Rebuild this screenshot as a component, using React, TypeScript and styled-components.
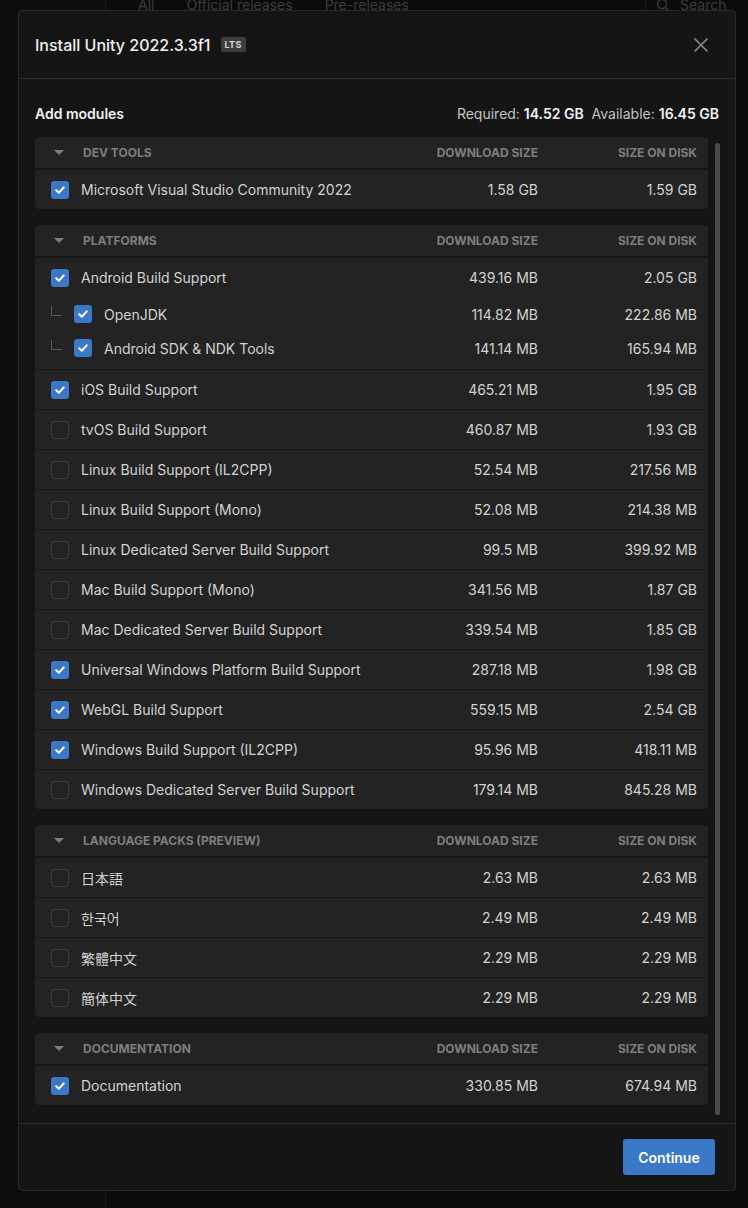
import styled, { createGlobalStyle } from "styled-components";

const GlobalStyle = createGlobalStyle`
  html, body {
    margin: 0;
    padding: 0;
    background: #0b0b0b;
    font-family: Inter, "Noto Sans", "Noto Sans CJK JP", sans-serif;
    -webkit-font-smoothing: antialiased;
  }
  * {
    box-sizing: border-box;
  }
`;

type Module = {
  name: string;
  download: string;
  disk: string;
  checked?: boolean;
  children?: Module[];
};

type Section = {
  title: string;
  modules: Module[];
};

const sections: Section[] = [
  {
    title: "Dev tools",
    modules: [
      { name: "Microsoft Visual Studio Community 2022", download: "1.58 GB", disk: "1.59 GB", checked: true },
    ],
  },
  {
    title: "Platforms",
    modules: [
      {
        name: "Android Build Support",
        download: "439.16 MB",
        disk: "2.05 GB",
        checked: true,
        children: [
          { name: "OpenJDK", download: "114.82 MB", disk: "222.86 MB", checked: true },
          { name: "Android SDK & NDK Tools", download: "141.14 MB", disk: "165.94 MB", checked: true },
        ],
      },
      { name: "iOS Build Support", download: "465.21 MB", disk: "1.95 GB", checked: true },
      { name: "tvOS Build Support", download: "460.87 MB", disk: "1.93 GB" },
      { name: "Linux Build Support (IL2CPP)", download: "52.54 MB", disk: "217.56 MB" },
      { name: "Linux Build Support (Mono)", download: "52.08 MB", disk: "214.38 MB" },
      { name: "Linux Dedicated Server Build Support", download: "99.5 MB", disk: "399.92 MB" },
      { name: "Mac Build Support (Mono)", download: "341.56 MB", disk: "1.87 GB" },
      { name: "Mac Dedicated Server Build Support", download: "339.54 MB", disk: "1.85 GB" },
      { name: "Universal Windows Platform Build Support", download: "287.18 MB", disk: "1.98 GB", checked: true },
      { name: "WebGL Build Support", download: "559.15 MB", disk: "2.54 GB", checked: true },
      { name: "Windows Build Support (IL2CPP)", download: "95.96 MB", disk: "418.11 MB", checked: true },
      { name: "Windows Dedicated Server Build Support", download: "179.14 MB", disk: "845.28 MB" },
    ],
  },
  {
    title: "Language packs (Preview)",
    modules: [
      { name: "日本語", download: "2.63 MB", disk: "2.63 MB" },
      { name: "한국어", download: "2.49 MB", disk: "2.49 MB" },
      { name: "繁體中文", download: "2.29 MB", disk: "2.29 MB" },
      { name: "簡体中文", download: "2.29 MB", disk: "2.29 MB" },
    ],
  },
  {
    title: "Documentation",
    modules: [{ name: "Documentation", download: "330.85 MB", disk: "674.94 MB", checked: true }],
  },
];

const Page = styled.div`
  position: relative;
  width: 748px;
  height: 1208px;
  overflow: hidden;
  display: flex;
  background: #0b0b0b;
`;

const Sidebar = styled.div`
  width: 106px;
  flex-shrink: 0;
  border-right: 1px solid #1c1c1c;
  background: #0d0d0d;
`;

const Main = styled.div`
  flex: 1;
`;

const TopBar = styled.div`
  height: 24px;
  display: flex;
  align-items: flex-start;
  padding-left: 32px;
  gap: 32px;
  margin-top: -4px;
  font-size: 14px;
  color: #3c3c3c;
`;

const SearchBox = styled.div`
  margin-left: auto;
  width: 103px;
  border-left: 1px solid #1c1c1c;
  display: flex;
  gap: 10px;
  padding-left: 10px;
  align-items: center;
`;

const Backdrop = styled.div`
  position: absolute;
  inset: 0;
  padding: 10px 12px 0 18px;
`;

const Dialog = styled.div`
  width: 718px;
  height: 1181px;
  display: flex;
  flex-direction: column;
  background: #151515;
  border: 1px solid #2a2a2a;
  border-radius: 4px;
`;

const Header = styled.div`
  height: 68px;
  flex-shrink: 0;
  display: flex;
  align-items: center;
  padding: 0 16px;
  border-bottom: 1px solid #2b2b2b;
`;

const Title = styled.h1`
  margin: 0;
  font-size: 16px;
  font-weight: 500;
  color: #f0f0f0;
`;

const Badge = styled.span`
  margin-left: 10px;
  padding: 2px 4px;
  border-radius: 2px;
  background: #3d3d3d;
  color: #d4d4d4;
  font-size: 9px;
  font-weight: 700;
  letter-spacing: 0.3px;
`;

const CloseButton = styled.button`
  margin-left: auto;
  margin-right: 9px;
  width: 18px;
  height: 18px;
  padding: 0;
  border: none;
  background: none;
  display: flex;
  align-items: center;
  justify-content: center;
`;

const SummaryRow = styled.div`
  display: flex;
  align-items: center;
  flex-shrink: 0;
  height: 20px;
  margin: 24px 0 14px;
  padding: 0 16px;
`;

const SummaryTitle = styled.span`
  font-size: 14px;
  font-weight: 600;
  color: #f2f2f2;
`;

const SummaryInfo = styled.span`
  margin-left: auto;
  font-size: 14px;
  color: #c4c4c4;
  b {
    color: #f2f2f2;
    font-weight: 600;
  }
`;

const Body = styled.div`
  flex: 1;
  display: flex;
  gap: 7px;
  padding: 0 15px 0 16px;
  min-height: 0;
`;

const List = styled.div`
  flex: 1;
  display: flex;
  flex-direction: column;
  gap: 16px;
`;

const ScrollThumb = styled.div`
  width: 5px;
  margin-top: 6px;
  height: 972px;
  border-radius: 3px;
  background: #4a4a4a;
`;

const Card = styled.div`
  background: #232323;
  border-radius: 4px;
  overflow: hidden;
`;

const Columns = styled.div`
  display: grid;
  grid-template-columns: 1fr 150px 159px;
  align-items: center;
  padding-right: 11px;
`;

const SectionHead = styled(Columns)`
  height: 32px;
  border-bottom: 1px solid #181818;
  font-size: 12px;
  font-weight: 700;
  color: #7e7e7e;
  text-transform: uppercase;
`;

const HeadLabel = styled.div`
  display: flex;
  align-items: center;
  padding-left: 19px;
  gap: 19px;
`;

const Caret = styled.span`
  width: 0;
  height: 0;
  border-left: 5px solid transparent;
  border-right: 5px solid transparent;
  border-top: 5px solid #7e7e7e;
`;

const Group = styled.div<{ $nested?: boolean }>`
  border-top: 1px solid #181818;
  &:first-of-type {
    border-top: none;
  }
  padding-bottom: ${(p) => (p.$nested ? "4px" : "0")};
`;

const Row = styled(Columns)<{ $sub?: boolean }>`
  height: ${(p) => (p.$sub ? "34px" : "39px")};
  font-size: 14px;
  color: #d2d2d2;
  ${Group}:first-of-type > &:first-child {
    height: 40px;
  }
`;

const NameCell = styled.div`
  display: flex;
  align-items: center;
  gap: 12px;
  padding-left: 16px;
`;

const TreeLine = styled.span`
  width: 11px;
  height: 10px;
  margin-top: -7px;
  border-left: 1px solid #5a5a5a;
  border-bottom: 1px solid #5a5a5a;
`;

const Box = styled.span<{ $checked?: boolean }>`
  width: 18px;
  height: 18px;
  border-radius: 3px;
  flex-shrink: 0;
  display: flex;
  align-items: center;
  justify-content: center;
  background: ${(p) => (p.$checked ? "#3b78c8" : "transparent")};
  border: ${(p) => (p.$checked ? "none" : "1px solid #3c3c3c")};
`;

const Size = styled.div`
  text-align: right;
`;

const Footer = styled.div`
  height: 67px;
  flex-shrink: 0;
  border-top: 1px solid #2b2b2b;
  display: flex;
  align-items: center;
  justify-content: flex-end;
  padding: 0 20px 0 16px;
`;

const PrimaryButton = styled.button`
  width: 92px;
  height: 36px;
  border: none;
  border-radius: 3px;
  background: #3b78c8;
  color: #ffffff;
  font-family: inherit;
  font-size: 14px;
  font-weight: 600;
  margin-top: 0;
`;

const Check = () => (
  <svg width="12" height="12" viewBox="0 0 12 12">
    <path d="M2.2 6.3 L4.8 8.8 L9.8 3.4" fill="none" stroke="#fff" strokeWidth="2" strokeLinecap="round" strokeLinejoin="round" />
  </svg>
);

const ModuleRow = ({ m, sub }: { m: Module; sub?: boolean }) => (
  <Row $sub={sub}>
    <NameCell>
      {sub && <TreeLine />}
      <Box $checked={m.checked}>{m.checked && <Check />}</Box>
      <span>{m.name}</span>
    </NameCell>
    <Size>{m.download}</Size>
    <Size>{m.disk}</Size>
  </Row>
);

export default function App() {
  return (
    <>
      <GlobalStyle />
      <Page>
        <Sidebar />
        <Main>
          <TopBar>
            <span>All</span>
            <span>Official releases</span>
            <span>Pre-releases</span>
            <SearchBox>
              <svg width="14" height="14" viewBox="0 0 14 14">
                <circle cx="6" cy="6" r="4.5" fill="none" stroke="#3c3c3c" strokeWidth="1.4" />
                <path d="M9.5 9.5 L13 13" stroke="#3c3c3c" strokeWidth="1.4" />
              </svg>
              <span>Search</span>
            </SearchBox>
          </TopBar>
        </Main>
        <Backdrop>
          <Dialog>
            <Header>
              <Title>Install Unity 2022.3.3f1</Title>
              <Badge>LTS</Badge>
              <CloseButton aria-label="Close">
                <svg width="16" height="16" viewBox="0 0 16 16">
                  <path d="M1.5 1.5 L14.5 14.5 M14.5 1.5 L1.5 14.5" stroke="#8c8c8c" strokeWidth="1.6" />
                </svg>
              </CloseButton>
            </Header>
            <SummaryRow>
              <SummaryTitle>Add modules</SummaryTitle>
              <SummaryInfo>
                Required: <b>14.52 GB</b>&nbsp; Available: <b>16.45 GB</b>
              </SummaryInfo>
            </SummaryRow>
            <Body>
              <List>
                {sections.map((s) => (
                  <Card key={s.title}>
                    <SectionHead>
                      <HeadLabel>
                        <Caret />
                        <span>{s.title}</span>
                      </HeadLabel>
                      <Size>Download size</Size>
                      <Size>Size on disk</Size>
                    </SectionHead>
                    {s.modules.map((m) => (
                      <Group key={m.name} $nested={!!m.children}>
                        <ModuleRow m={m} />
                        {m.children?.map((c) => (
                          <ModuleRow key={c.name} m={c} sub />
                        ))}
                      </Group>
                    ))}
                  </Card>
                ))}
              </List>
              <ScrollThumb />
            </Body>
            <Footer>
              <PrimaryButton>Continue</PrimaryButton>
            </Footer>
          </Dialog>
        </Backdrop>
      </Page>
    </>
  );
}
